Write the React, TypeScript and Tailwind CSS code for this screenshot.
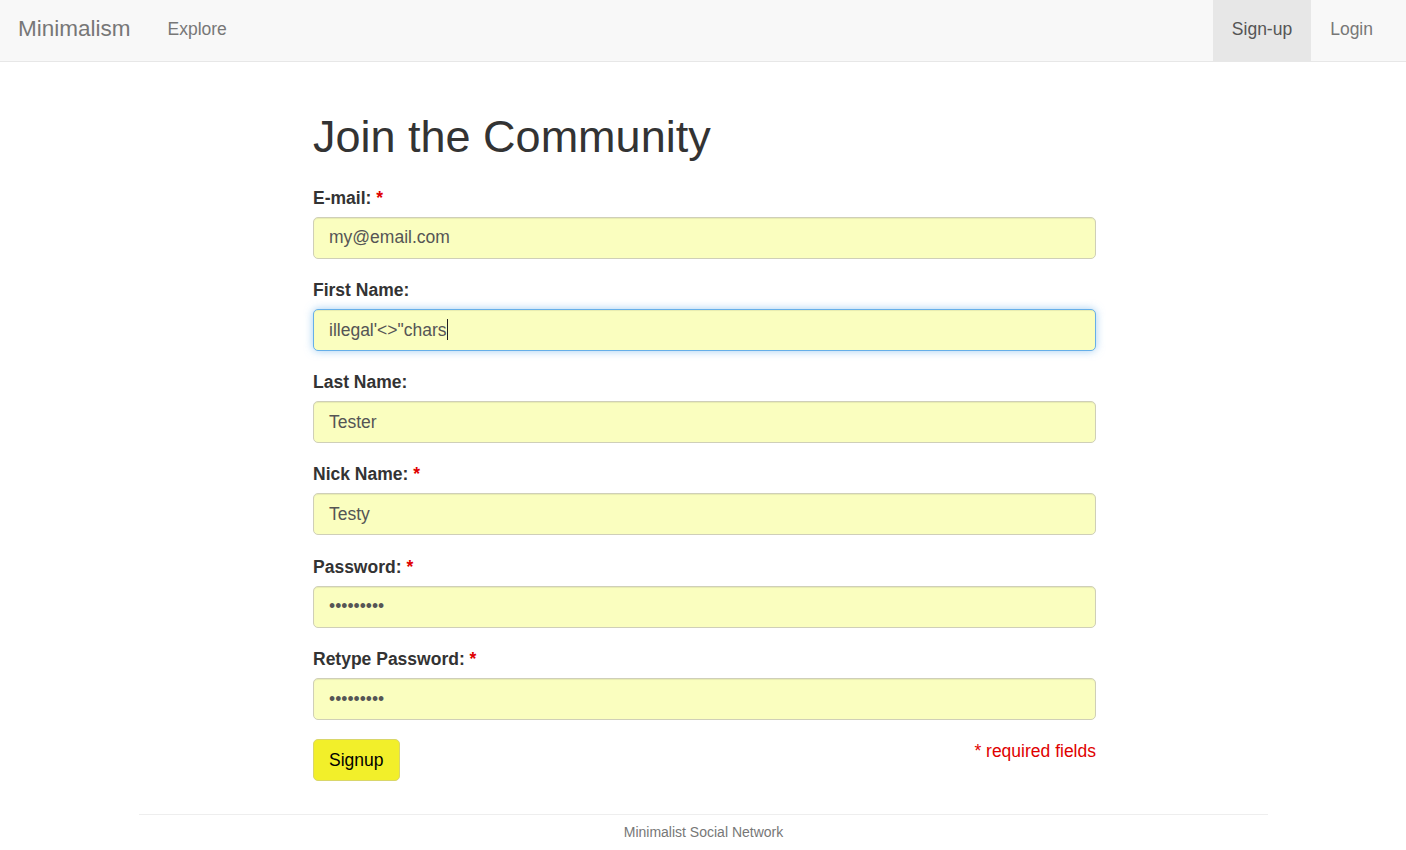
const fields = [
  { label: "E-mail:", required: true, value: "my@email.com" },
  { label: "First Name:", required: false, value: "illegal'<>\"chars", focused: true },
  { label: "Last Name:", required: false, value: "Tester" },
  { label: "Nick Name:", required: true, value: "Testy" },
  { label: "Password:", required: true, value: "•••••••••" },
  { label: "Retype Password:", required: true, value: "•••••••••" },
];

const Navbar = () => (
  <nav className="h-[62px] bg-[#f8f8f8] border-b border-[#e7e7e7] flex justify-between text-[#777]">
    <div className="flex">
      <a className="pl-[18px] pr-[18px] pt-[16px] text-[22.5px] leading-[25px]">Minimalism</a>
      <a className="px-[19px] pt-[17px] text-[17.5px] leading-[25px]">Explore</a>
    </div>
    <div className="flex mr-[14px]">
      <a className="px-[19px] pt-[17px] text-[17.5px] leading-[25px] bg-[#e7e7e7] text-[#555]">Sign-up</a>
      <a className="px-[19px] pt-[17px] text-[17.5px] leading-[25px]">Login</a>
    </div>
  </nav>
);

const Field = ({ label, required, value, focused }: { label: string; required: boolean; value: string; focused?: boolean }) => (
  <div className="mb-[18.25px]">
    <label className="block font-bold text-[#333] text-[17.5px] leading-[25px] pt-[1px] mb-[6px]">
      {label} {required && <span className="text-[#e00000]">*</span>}
    </label>
    <div
      className={`h-[42px] rounded-[5px] bg-[#fafebf] px-[15px] flex items-center text-[17.5px] text-[#555] border ${
        focused
          ? "border-[#66afe9] shadow-[inset_0_1px_1px_rgba(0,0,0,0.075),0_0_8px_rgba(102,175,233,0.6)]"
          : "border-[#cfcfb8] shadow-[inset_0_1px_1px_rgba(0,0,0,0.075)]"
      }`}
    >
      <span className="whitespace-pre">{value}</span>
      {focused && <span className="inline-block w-px h-[21px] bg-[#222]" />}
    </div>
  </div>
);

export default function App() {
  return (
    <div className="min-h-screen bg-white font-['Liberation_Sans',Arial,sans-serif]">
      <Navbar />
      <div className="w-[1130px] mx-auto pl-[1px]">
        <div className="w-[783px] ml-[174px] pt-[50px]">
          <h1 className="text-[45px] leading-[49.5px] text-[#333] mb-[23px]">Join the Community</h1>
          {fields.map((f) => (
            <Field key={f.label} {...f} />
          ))}
          <div className="flex justify-between items-start pt-[1px]">
            <button className="h-[42px] px-[15px] rounded-[5px] bg-[#f2ef2a] border border-[#d9d66a] text-[17.5px] text-black">
              Signup
            </button>
            <span className="text-[17.5px] leading-[25px] text-[#e00000]">* required fields</span>
          </div>
        </div>
        <hr className="mt-[33px] border-0 border-t border-[#eee]" />
        <p className="mt-[7px] text-center text-[14px] leading-[20px] text-[#777]">Minimalist Social Network</p>
      </div>
    </div>
  );
}
